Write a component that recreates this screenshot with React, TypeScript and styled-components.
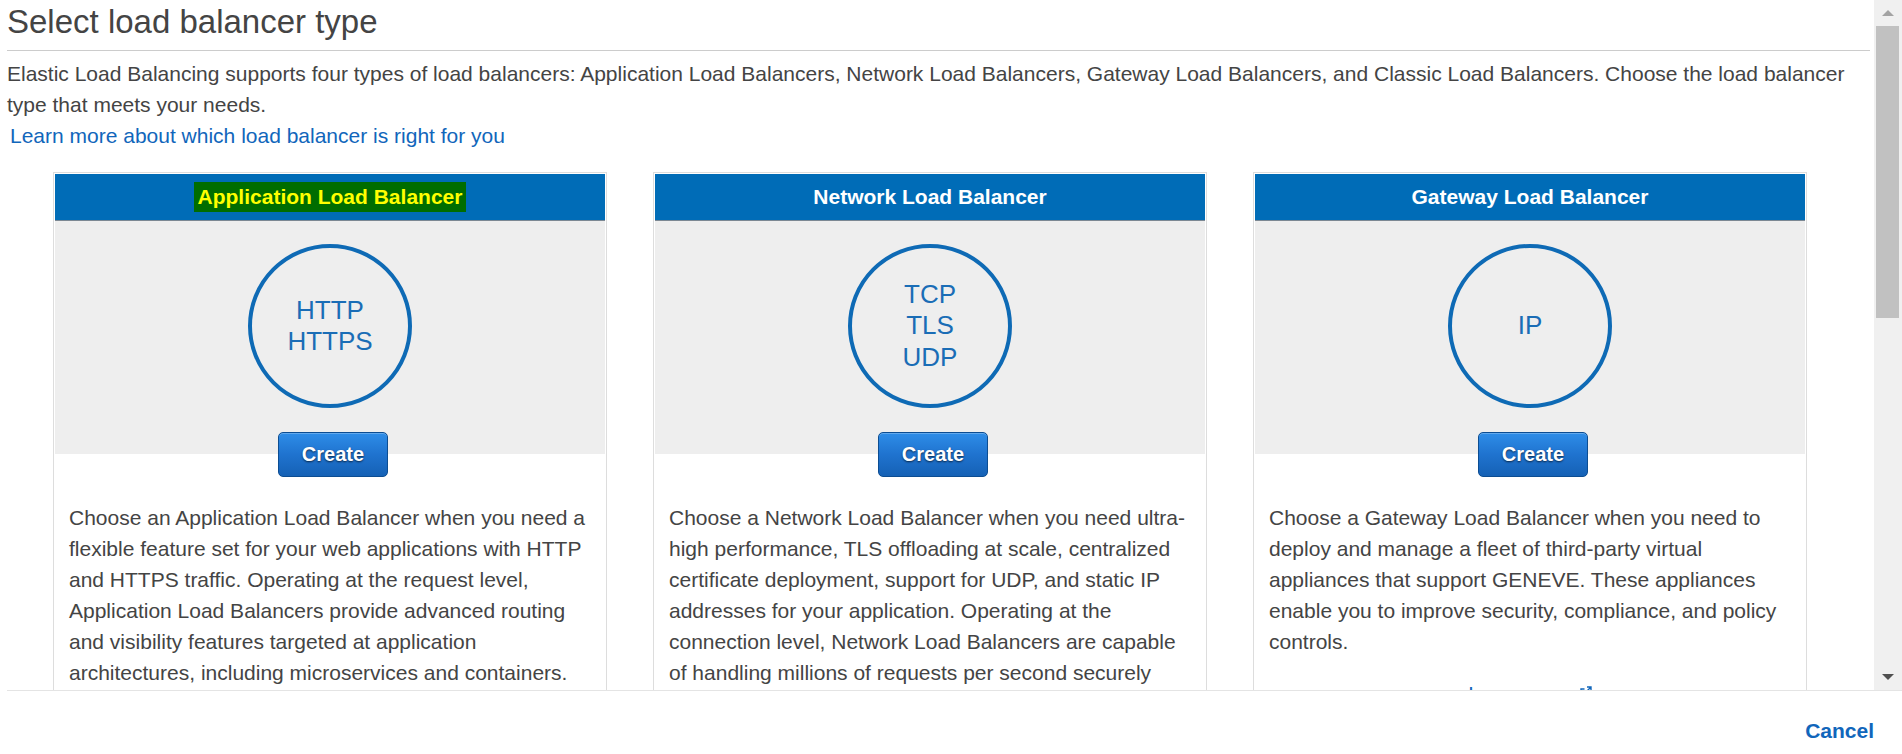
import React from 'react';
import styled, { createGlobalStyle } from 'styled-components';

const GlobalStyle = createGlobalStyle`
  html, body {
    margin: 0;
    padding: 0;
    background: #fff;
  }
  body {
    font-family: "Liberation Sans", Arial, Helvetica, sans-serif;
    color: #444;
  }
  * {
    box-sizing: border-box;
  }
`;

type Balancer = {
  name: string;
  protocols: string[];
  description: string;
  highlighted?: boolean;
};

const balancers: Balancer[] = [
  {
    name: 'Application Load Balancer',
    protocols: ['HTTP', 'HTTPS'],
    highlighted: true,
    description:
      'Choose an Application Load Balancer when you need a flexible feature set for your web applications with HTTP and HTTPS traffic. Operating at the request level, Application Load Balancers provide advanced routing and visibility features targeted at application architectures, including microservices and containers.'
  },
  {
    name: 'Network Load Balancer',
    protocols: ['TCP', 'TLS', 'UDP'],
    description:
      'Choose a Network Load Balancer when you need ultra-high performance, TLS offloading at scale, centralized certificate deployment, support for UDP, and static IP addresses for your application. Operating at the connection level, Network Load Balancers are capable of handling millions of requests per second securely while maintaining ultra-low latencies.'
  },
  {
    name: 'Gateway Load Balancer',
    protocols: ['IP'],
    description:
      'Choose a Gateway Load Balancer when you need to deploy and manage a fleet of third-party virtual appliances that support GENEVE. These appliances enable you to improve security, compliance, and policy controls.'
  }
];

const ExternalIcon = () => (
  <svg width="12" height="12" viewBox="0 0 12 12" fill="none" stroke="#1166bb" strokeWidth="1.4">
    <path d="M7 1h4v4M11 1L5.5 6.5M9 7.5V11H1V3h3.5" />
  </svg>
);

const App = () => (
  <Page>
    <GlobalStyle />
    <Main>
      <Viewport>
        <Title>Select load balancer type</Title>
        <Intro>
          Elastic Load Balancing supports four types of load balancers: Application Load Balancers,
          Network Load Balancers, Gateway Load Balancers, and Classic Load Balancers. Choose the load
          balancer type that meets your needs.
        </Intro>
        <MoreLink href="#">Learn more about which load balancer is right for you</MoreLink>

        <Cards>
          {balancers.map(b => (
            <Card key={b.name}>
              <CardHeader>
                {b.highlighted ? <Highlight>{b.name}</Highlight> : b.name}
              </CardHeader>
              <Graphic>
                <Circle>
                  {b.protocols.map(p => (
                    <span key={p}>{p}</span>
                  ))}
                </Circle>
                <CreateButton type="button">Create</CreateButton>
              </Graphic>
              <Description>{b.description}</Description>
              <CardLink href="#">
                Learn more <ExternalIcon />
              </CardLink>
            </Card>
          ))}
        </Cards>
      </Viewport>

      <Scrollbar>
        <ScrollArrow $dir="up" />
        <Thumb />
        <TrackRest />
        <ScrollArrow $dir="down" />
      </Scrollbar>
    </Main>

    <Footer>
      <CancelLink href="#">Cancel</CancelLink>
    </Footer>
  </Page>
);

const Page = styled.div`
  display: flex;
  flex-direction: column;
  height: 754px;
  overflow: hidden;
`;

const Main = styled.div`
  display: flex;
  height: 690px;
  flex: none;
`;

const Viewport = styled.div`
  flex: 1;
  min-width: 0;
  overflow: hidden;
  padding: 0 4px 0 7px;
`;

const Title = styled.h1`
  margin: 0;
  padding-bottom: 6px;
  border-bottom: 1px solid #cccccc;
  font-size: 33px;
  font-weight: normal;
  line-height: 44px;
  color: #444;
`;

const Intro = styled.p`
  margin: 8px 0 0;
  font-size: 21px;
  line-height: 30.5px;
`;

const MoreLink = styled.a`
  display: block;
  padding-left: 3px;
  font-size: 21px;
  line-height: 31px;
  color: #1166bb;
  text-decoration: none;
`;

const Cards = styled.div`
  display: grid;
  grid-template-columns: repeat(3, 554px);
  column-gap: 46px;
  align-items: start;
  margin: 21px 0 0 46px;
`;

const Card = styled.div`
  border: 1px solid #dddddd;
  padding: 1px;
  background: #fff;
`;

const CardHeader = styled.div`
  height: 47px;
  display: flex;
  align-items: center;
  justify-content: center;
  background: #006cb7;
  border-bottom: 1px solid #7c8893;
  color: #fff;
  font-size: 21px;
  font-weight: bold;
`;

const Highlight = styled.span`
  padding: 3px 4px;
  background: #006d00;
  color: #ffff00;
`;

const Graphic = styled.div`
  display: flex;
  flex-direction: column;
  align-items: center;
  padding-top: 23px;
  background: #eeeeee;
`;

const Circle = styled.div`
  width: 164px;
  height: 164px;
  display: flex;
  flex-direction: column;
  align-items: center;
  justify-content: center;
  border: 4px solid #0e6ab5;
  border-radius: 50%;
  color: #1a6db6;
  font-size: 26px;
  line-height: 31.5px;
`;

const CreateButton = styled.button`
  width: 110px;
  height: 45px;
  margin: 24px 0 -23px 6px;
  padding: 0;
  border: 1px solid #0c4d92;
  border-radius: 5px;
  background: linear-gradient(#2e8de8 0%, #1f73cf 50%, #1561b5 100%);
  box-shadow: inset 0 1px 0 rgba(255, 255, 255, 0.25);
  color: #fff;
  font-family: "Liberation Sans", Arial, Helvetica, sans-serif;
  font-size: 20px;
  font-weight: bold;
  text-shadow: 0 1px 2px rgba(0, 0, 0, 0.65);
  cursor: pointer;
`;

const Description = styled.p`
  margin: 0;
  padding: 48px 13px 0 14px;
  font-size: 21px;
  line-height: 31px;
  color: #444;
`;

const CardLink = styled.a`
  display: flex;
  align-items: flex-start;
  justify-content: center;
  gap: 4px;
  margin-top: 21px;
  padding-bottom: 20px;
  font-size: 21px;
  line-height: 31px;
  color: #1166bb;
  text-decoration: none;

  svg {
    margin-top: 8px;
  }
`;

const Scrollbar = styled.div`
  width: 28px;
  flex: none;
  display: flex;
  flex-direction: column;
  background: #f0f0f0;
`;

const ScrollArrow = styled.div<{ $dir: 'up' | 'down' }>`
  height: 26px;
  flex: none;
  display: flex;
  align-items: center;
  justify-content: center;

  &::before {
    content: '';
    border-left: 6px solid transparent;
    border-right: 6px solid transparent;
    ${p =>
      p.$dir === 'up'
        ? 'border-bottom: 6px solid #a3a3a3;'
        : 'border-top: 6px solid #505050;'}
  }
`;

const Thumb = styled.div`
  height: 292px;
  flex: none;
  margin: 0 3px 0 2px;
  background: #c1c1c1;
`;

const TrackRest = styled.div`
  flex: 1;
`;

const Footer = styled.div`
  flex: 1;
  display: flex;
  justify-content: flex-end;
  margin-left: 7px;
  padding: 25px 28px 0 0;
  border-top: 1px solid #e4e4e4;
`;

const CancelLink = styled.a`
  font-size: 21px;
  font-weight: bold;
  line-height: 30px;
  color: #1166bb;
  text-decoration: none;
`;

export default App;
